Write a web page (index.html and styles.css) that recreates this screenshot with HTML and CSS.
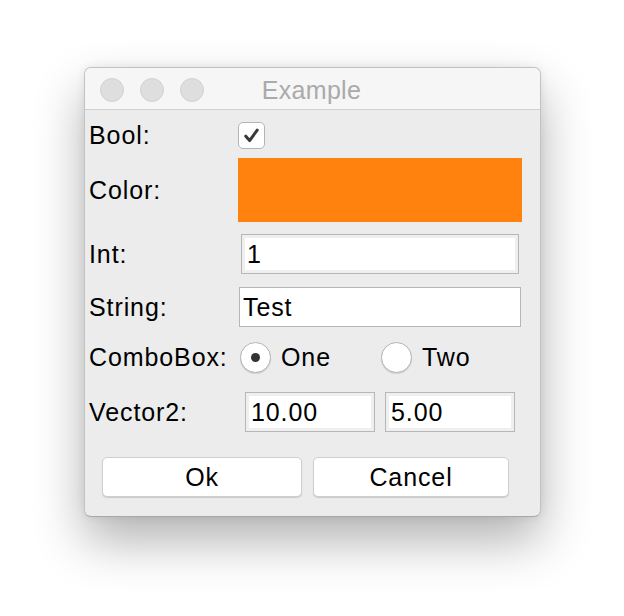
FILE: index.html
```html
<!DOCTYPE html>
<html lang="en">
<head>
  <meta charset="UTF-8" />
  <title>Example</title>
  <link rel="stylesheet" href="styles.css">
</head>
<body>

<div class="window">
  <div class="titlebar">
    <div class="lights">
      <span class="light"></span>
      <span class="light"></span>
      <span class="light"></span>
    </div>
    <div class="title">Example</div>
  </div>

  <div class="form">
    <div class="row row-bool">
      <label>Bool:</label>
      <div class="checkbox">
        <svg class="tick" width="19" height="19" viewBox="0 0 19 19"><path d="M3.8 10.2 L7.6 14.6 L15.2 4.2" fill="none" stroke="#3a3a3a" stroke-width="3" stroke-linecap="round" stroke-linejoin="round"/></svg>
      </div>
    </div>

    <div class="row row-color">
      <label>Color:</label>
      <div class="swatch"></div>
    </div>

    <div class="row row-int">
      <label>Int:</label>
      <input class="field field-int inset" type="text" value="1">
    </div>

    <div class="row row-string">
      <label>String:</label>
      <input class="field field-string" type="text" value="Test">
    </div>

    <div class="row row-combo">
      <label>ComboBox:</label>
      <div class="radios">
        <div class="option option-first"><span class="radio checked"></span>One</div>
        <div class="option"><span class="radio"></span>Two</div>
      </div>
    </div>

    <div class="row row-vector">
      <label>Vector2:</label>
      <div class="pair">
        <input class="field field-vec inset" type="text" value="10.00">
        <input class="field field-vec inset" type="text" value="5.00">
      </div>
    </div>

    <div class="buttons">
      <button class="btn btn-ok">Ok</button>
      <button class="btn btn-cancel">Cancel</button>
    </div>
  </div>
</div>

</body>
</html>
```

FILE: styles.css
```css
* { box-sizing: border-box; margin: 0; padding: 0; }
html, body { height: 100%; }
body {
  font-family: "Liberation Sans", Arial, sans-serif;
  background: #fff;
  color: #000;
  padding-top: 67px;
  padding-left: 84px;
}

.window {
  width: 457px;
  background: #ececec;
  border: 1px solid #c2c2c2;
  border-bottom-color: #a8a8a8;
  border-radius: 7px;
  overflow: hidden;
  box-shadow: 0 24px 50px rgba(0,0,0,0.3), 0 0 10px rgba(0,0,0,0.08);
}

/* title bar */
.titlebar {
  position: relative;
  height: 42px;
  background: #f6f6f6;
  border-bottom: 1px solid #d0d0d0;
  display: flex;
  align-items: center;
  justify-content: center;
}
.lights {
  position: absolute;
  left: 15px;
  top: 10px;
  display: flex;
  gap: 16px;
}
.light {
  width: 24px;
  height: 24px;
  border-radius: 50%;
  background: #dedede;
  border: 1px solid #d2d2d2;
}
.title {
  font-size: 25px;
  color: #aaa;
  letter-spacing: 0.3px;
  margin: 3px 0 0 -2px;
}

/* form rows */
.form {
  padding: 12px 0 19px 4px;
  font-size: 25px;
  line-height: 1;
  letter-spacing: 0.9px;
}
.row {
  display: flex;
  align-items: center;
}
.row label {
  width: 149px;
  flex: none;
}

.row-color { margin-top: 9px; }
.row-int { margin-top: 12px; }
.row-string { margin-top: 13px; }
.row-combo { margin-top: 15px; }
.row-vector { margin-top: 19px; }

.checkbox {
  width: 27px;
  height: 27px;
  background: #fff;
  border: 1px solid #b4b4b4;
  border-radius: 5px;
  display: flex;
  align-items: center;
  justify-content: center;
}
.tick { display: block; }

.swatch {
  width: 284px;
  height: 64px;
  background: #fe820d;
}

.field {
  height: 40px;
  font: inherit;
  letter-spacing: inherit;
  color: #000;
  background: #fff;
  border: 1px solid #b6b6b6;
  padding: 0 3px;
  outline: none;
}
.inset {
  box-shadow: inset 0 0 0 3px #efefef;
  padding: 0 5px;
}
.field-int { width: 278px; margin-left: 3px; }
.field-string { width: 282px; margin-left: 1px; }

.radios {
  display: flex;
  margin-left: 2px;
}
.option {
  display: flex;
  align-items: center;
  gap: 10px;
}
.option-first { width: 141px; }
.radio {
  width: 31px;
  height: 31px;
  border-radius: 50%;
  background: #fff;
  border: 1px solid #b4b4b4;
  box-shadow: 0 1px 1px rgba(0,0,0,0.12);
  display: flex;
  align-items: center;
  justify-content: center;
}
.radio.checked::after {
  content: "";
  width: 9px;
  height: 9px;
  border-radius: 50%;
  background: #333;
}

.pair {
  display: flex;
  gap: 10px;
  margin-left: 7px;
}
.field-vec { width: 130px; }

/* dialog buttons */
.buttons {
  display: flex;
  gap: 11px;
  margin: 25px 0 0 13px;
}
.btn {
  height: 40px;
  font: inherit;
  letter-spacing: inherit;
  background: #fff;
  color: #000;
  border: 1px solid #cfcfcf;
  border-radius: 5px;
  box-shadow: 0 1px 1px rgba(0,0,0,0.15);
}
.btn-ok { width: 200px; }
.btn-cancel { width: 196px; }
```
